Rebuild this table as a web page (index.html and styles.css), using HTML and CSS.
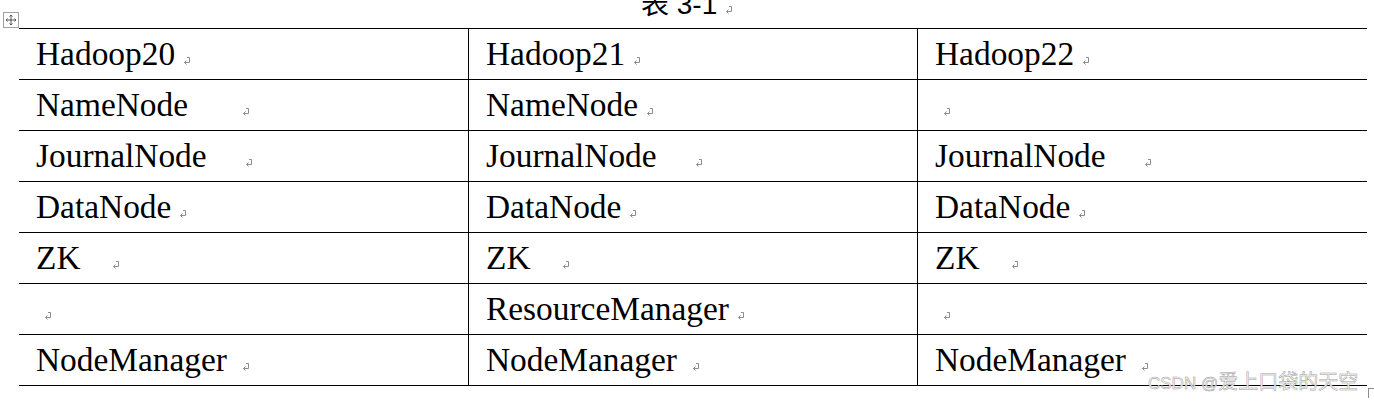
FILE: index.html
```html
<!DOCTYPE html>
<html lang="zh">
<head>
<meta charset="utf-8">
<title>表 3-1</title>
<link rel="stylesheet" href="styles.css">
</head>
<body>
<div class="page">
  <div class="move-handle">
    <svg width="12" height="12" viewBox="0 0 12 12"><path d="M6 1v10M1 6h10M6 1l-1.5 1.5M6 1l1.5 1.5M6 11l-1.5-1.5M6 11l1.5-1.5M1 6l1.5-1.5M1 6l1.5 1.5M11 6l-1.5-1.5M11 6l-1.5 1.5" stroke="#555" stroke-width="1" fill="none"/></svg>
  </div>
  <div class="caption"><span class="caption-text">表 3-1 <svg class="pm" width="8" height="8" viewBox="0 0 8 8"><path d="M4 0.5H6.5V5.5H1.5M3.5 3.5L1.5 5.5L3.5 7.5" stroke="#8c8c8c" stroke-width="1" fill="none"/></svg></span></div>
  <div class="grid">
    <div class="cell">Hadoop20 <svg class="pm" width="8" height="8" viewBox="0 0 8 8"><path d="M4 0.5H6.5V5.5H1.5M3.5 3.5L1.5 5.5L3.5 7.5" stroke="#8c8c8c" stroke-width="1" fill="none"/></svg></div>
    <div class="cell col">Hadoop21 <svg class="pm" width="8" height="8" viewBox="0 0 8 8"><path d="M4 0.5H6.5V5.5H1.5M3.5 3.5L1.5 5.5L3.5 7.5" stroke="#8c8c8c" stroke-width="1" fill="none"/></svg></div>
    <div class="cell col">Hadoop22 <svg class="pm" width="8" height="8" viewBox="0 0 8 8"><path d="M4 0.5H6.5V5.5H1.5M3.5 3.5L1.5 5.5L3.5 7.5" stroke="#8c8c8c" stroke-width="1" fill="none"/></svg></div>

    <div class="cell">NameNode       <svg class="pm" width="8" height="8" viewBox="0 0 8 8"><path d="M4 0.5H6.5V5.5H1.5M3.5 3.5L1.5 5.5L3.5 7.5" stroke="#8c8c8c" stroke-width="1" fill="none"/></svg></div>
    <div class="cell col">NameNode <svg class="pm" width="8" height="8" viewBox="0 0 8 8"><path d="M4 0.5H6.5V5.5H1.5M3.5 3.5L1.5 5.5L3.5 7.5" stroke="#8c8c8c" stroke-width="1" fill="none"/></svg></div>
    <div class="cell col"> <svg class="pm" width="8" height="8" viewBox="0 0 8 8"><path d="M4 0.5H6.5V5.5H1.5M3.5 3.5L1.5 5.5L3.5 7.5" stroke="#8c8c8c" stroke-width="1" fill="none"/></svg></div>

    <div class="cell">JournalNode     <svg class="pm" width="8" height="8" viewBox="0 0 8 8"><path d="M4 0.5H6.5V5.5H1.5M3.5 3.5L1.5 5.5L3.5 7.5" stroke="#8c8c8c" stroke-width="1" fill="none"/></svg></div>
    <div class="cell col">JournalNode     <svg class="pm" width="8" height="8" viewBox="0 0 8 8"><path d="M4 0.5H6.5V5.5H1.5M3.5 3.5L1.5 5.5L3.5 7.5" stroke="#8c8c8c" stroke-width="1" fill="none"/></svg></div>
    <div class="cell col">JournalNode     <svg class="pm" width="8" height="8" viewBox="0 0 8 8"><path d="M4 0.5H6.5V5.5H1.5M3.5 3.5L1.5 5.5L3.5 7.5" stroke="#8c8c8c" stroke-width="1" fill="none"/></svg></div>

    <div class="cell">DataNode <svg class="pm" width="8" height="8" viewBox="0 0 8 8"><path d="M4 0.5H6.5V5.5H1.5M3.5 3.5L1.5 5.5L3.5 7.5" stroke="#8c8c8c" stroke-width="1" fill="none"/></svg></div>
    <div class="cell col">DataNode <svg class="pm" width="8" height="8" viewBox="0 0 8 8"><path d="M4 0.5H6.5V5.5H1.5M3.5 3.5L1.5 5.5L3.5 7.5" stroke="#8c8c8c" stroke-width="1" fill="none"/></svg></div>
    <div class="cell col">DataNode <svg class="pm" width="8" height="8" viewBox="0 0 8 8"><path d="M4 0.5H6.5V5.5H1.5M3.5 3.5L1.5 5.5L3.5 7.5" stroke="#8c8c8c" stroke-width="1" fill="none"/></svg></div>

    <div class="cell">ZK    <svg class="pm" width="8" height="8" viewBox="0 0 8 8"><path d="M4 0.5H6.5V5.5H1.5M3.5 3.5L1.5 5.5L3.5 7.5" stroke="#8c8c8c" stroke-width="1" fill="none"/></svg></div>
    <div class="cell col">ZK    <svg class="pm" width="8" height="8" viewBox="0 0 8 8"><path d="M4 0.5H6.5V5.5H1.5M3.5 3.5L1.5 5.5L3.5 7.5" stroke="#8c8c8c" stroke-width="1" fill="none"/></svg></div>
    <div class="cell col">ZK    <svg class="pm" width="8" height="8" viewBox="0 0 8 8"><path d="M4 0.5H6.5V5.5H1.5M3.5 3.5L1.5 5.5L3.5 7.5" stroke="#8c8c8c" stroke-width="1" fill="none"/></svg></div>

    <div class="cell"> <svg class="pm" width="8" height="8" viewBox="0 0 8 8"><path d="M4 0.5H6.5V5.5H1.5M3.5 3.5L1.5 5.5L3.5 7.5" stroke="#8c8c8c" stroke-width="1" fill="none"/></svg></div>
    <div class="cell col">ResourceManager <svg class="pm" width="8" height="8" viewBox="0 0 8 8"><path d="M4 0.5H6.5V5.5H1.5M3.5 3.5L1.5 5.5L3.5 7.5" stroke="#8c8c8c" stroke-width="1" fill="none"/></svg></div>
    <div class="cell col"> <svg class="pm" width="8" height="8" viewBox="0 0 8 8"><path d="M4 0.5H6.5V5.5H1.5M3.5 3.5L1.5 5.5L3.5 7.5" stroke="#8c8c8c" stroke-width="1" fill="none"/></svg></div>

    <div class="cell">NodeManager  <svg class="pm" width="8" height="8" viewBox="0 0 8 8"><path d="M4 0.5H6.5V5.5H1.5M3.5 3.5L1.5 5.5L3.5 7.5" stroke="#8c8c8c" stroke-width="1" fill="none"/></svg></div>
    <div class="cell col">NodeManager  <svg class="pm" width="8" height="8" viewBox="0 0 8 8"><path d="M4 0.5H6.5V5.5H1.5M3.5 3.5L1.5 5.5L3.5 7.5" stroke="#8c8c8c" stroke-width="1" fill="none"/></svg></div>
    <div class="cell col">NodeManager  <svg class="pm" width="8" height="8" viewBox="0 0 8 8"><path d="M4 0.5H6.5V5.5H1.5M3.5 3.5L1.5 5.5L3.5 7.5" stroke="#8c8c8c" stroke-width="1" fill="none"/></svg></div>
  </div>
  <div class="row-end"></div>
  <div class="watermark"><span class="wm-latin">CSDN @</span>爱上口袋的天空</div>
</div>
</body>
</html>
```

FILE: styles.css
```css
html, body {
  margin: 0;
  padding: 0;
  background: #fff;
}

.page {
  position: relative;
  width: 1374px;
  height: 401px;
  overflow: hidden;
  background: #fff;
}

.move-handle {
  position: absolute;
  left: 3px;
  top: 12px;
  width: 16px;
  height: 16px;
  box-sizing: border-box;
  border: 1px solid #a0a0a0;
  display: flex;
  align-items: center;
  justify-content: center;
}

.caption {
  height: 28px;
  display: flex;
  justify-content: center;
  align-items: flex-start;
  font-family: "Liberation Sans", "Noto Sans CJK SC", sans-serif;
  font-size: 28px;
  line-height: 10px;
  color: #000;
  white-space: pre;
}

.caption-text {
  display: block;
}

.grid {
  margin-left: 19px;
  width: 1348px;
  display: grid;
  grid-template-columns: 449px 449px 450px;
  border-top: 1px solid #000;
}

.cell {
  height: 50px;
  border-bottom: 1px solid #000;
  padding-left: 17px;
  font-family: "Liberation Serif", "Times New Roman", serif;
  font-size: 33.4px;
  line-height: 50px;
  word-spacing: -0.6px;
  color: #000;
  white-space: pre;
  overflow: hidden;
}

.cell.col {
  border-left: 1px solid #000;
}

.pm {
  vertical-align: baseline;
}

.row-end {
  position: absolute;
  left: 1368px;
  top: 388px;
  width: 6px;
  height: 9px;
  border-left: 1px solid #8c8c8c;
  border-top: 1px solid #8c8c8c;
}

.watermark {
  position: absolute;
  left: 1148px;
  top: 369px;
  font-family: "Noto Sans CJK SC", "Liberation Sans", sans-serif;
  font-size: 20px;
  line-height: 24px;
  color: #fafafa;
  -webkit-text-stroke: 0.5px #9a9a9a;
  white-space: pre;
}

.wm-latin {
  font-family: "Liberation Sans", sans-serif;
  font-size: 17px;
}
```
